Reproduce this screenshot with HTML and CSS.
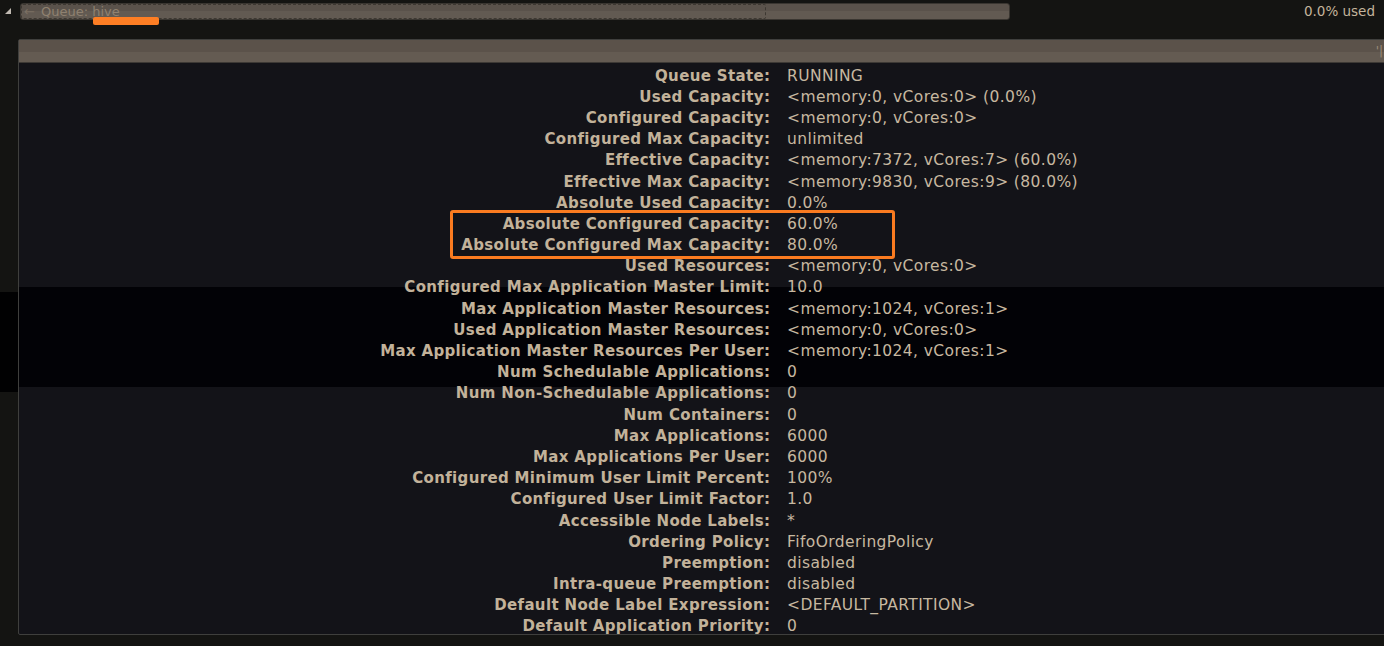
FILE: index.html
```html
<!DOCTYPE html>
<html>
<head>
<meta charset="utf-8">
<link rel="stylesheet" href="styles.css">
</head>
<body>
<div class="band-outer"></div>
<div class="topbar">
  <svg class="tri" width="6" height="6" viewBox="0 0 6 6"><polygon points="6,0 6,6 0,6" fill="#c0bab2"/></svg>
  <div class="qbar">
    <div class="qfill"><span class="arrow">←</span> Queue: hive</div>
  </div>
  <div class="used">0.0% used</div>
</div>
<div class="uline"></div>
<div class="panel">
  <div class="band-inner"></div>
  <div class="phead"><span class="pmark">'|</span></div>
  <div class="info">
    <div class="k">Queue State:</div><div class="v">RUNNING</div>
    <div class="k">Used Capacity:</div><div class="v">&lt;memory:0, vCores:0&gt; (0.0%)</div>
    <div class="k">Configured Capacity:</div><div class="v">&lt;memory:0, vCores:0&gt;</div>
    <div class="k">Configured Max Capacity:</div><div class="v">unlimited</div>
    <div class="k">Effective Capacity:</div><div class="v">&lt;memory:7372, vCores:7&gt; (60.0%)</div>
    <div class="k">Effective Max Capacity:</div><div class="v">&lt;memory:9830, vCores:9&gt; (80.0%)</div>
    <div class="k">Absolute Used Capacity:</div><div class="v">0.0%</div>
    <div class="k">Absolute Configured Capacity:</div><div class="v">60.0%</div>
    <div class="k">Absolute Configured Max Capacity:</div><div class="v">80.0%</div>
    <div class="k">Used Resources:</div><div class="v">&lt;memory:0, vCores:0&gt;</div>
    <div class="k">Configured Max Application Master Limit:</div><div class="v">10.0</div>
    <div class="k">Max Application Master Resources:</div><div class="v">&lt;memory:1024, vCores:1&gt;</div>
    <div class="k">Used Application Master Resources:</div><div class="v">&lt;memory:0, vCores:0&gt;</div>
    <div class="k">Max Application Master Resources Per User:</div><div class="v">&lt;memory:1024, vCores:1&gt;</div>
    <div class="k">Num Schedulable Applications:</div><div class="v">0</div>
    <div class="k">Num Non-Schedulable Applications:</div><div class="v">0</div>
    <div class="k">Num Containers:</div><div class="v">0</div>
    <div class="k">Max Applications:</div><div class="v">6000</div>
    <div class="k">Max Applications Per User:</div><div class="v">6000</div>
    <div class="k">Configured Minimum User Limit Percent:</div><div class="v">100%</div>
    <div class="k">Configured User Limit Factor:</div><div class="v">1.0</div>
    <div class="k">Accessible Node Labels:</div><div class="v">*</div>
    <div class="k">Ordering Policy:</div><div class="v">FifoOrderingPolicy</div>
    <div class="k">Preemption:</div><div class="v">disabled</div>
    <div class="k">Intra-queue Preemption:</div><div class="v">disabled</div>
    <div class="k">Default Node Label Expression:</div><div class="v">&lt;DEFAULT_PARTITION&gt;</div>
    <div class="k">Default Application Priority:</div><div class="v">0</div>
  </div>
</div>
<div class="hl-box"></div>
</body>
</html>
```
FILE: styles.css
```css
html, body {
  margin: 0;
  padding: 0;
}
body {
  background: #141412;
  width: 1384px;
  height: 646px;
  overflow: hidden;
  position: relative;
  font-family: "DejaVu Sans", Verdana, sans-serif;
  color: #c4b49c;
}
.band-outer {
  position: absolute;
  left: 0;
  top: 292px;
  width: 100%;
  height: 100px;
  background: #010102;
}
.topbar {
  position: relative;
  display: flex;
  align-items: center;
  height: 20px;
  padding-top: 1px;
}
.tri {
  margin-left: 5px;
  margin-top: 0;
  flex: none;
}
.qbar {
  margin-left: 9px;
  width: 988px;
  height: 15px;
  border: 1px solid #3a3631;
  border-radius: 3px;
  background: linear-gradient(#5a524b 0, #5a524b 50%, #625a52 50%, #625a52 100%);
  position: relative;
  flex: none;
}
.qfill {
  width: 741px;
  height: 13px;
  border: 1px dashed #3d3832;
  border-radius: 2px;
  font-size: 13px;
  line-height: 13px;
  color: #8f8170;
  white-space: nowrap;
  padding-left: 2px;
  box-sizing: content-box;
}
.arrow {
  color: #7a6f62;
  margin-right: 2px;
}
.used {
  margin-left: auto;
  margin-right: 9px;
  font-size: 13.5px;
  color: #c4b49c;
}
.uline {
  position: absolute;
  left: 93px;
  top: 17px;
  width: 66px;
  height: 8px;
  background: #fd7e24;
  border-radius: 2px;
}
.panel {
  position: relative;
  margin-left: 18px;
  margin-top: 18px;
  width: 1380px;
  height: 596px;
  border: 1px solid #3f3f3d;
  border-radius: 2px;
  background: #131318;
  box-sizing: border-box;
}
.band-inner {
  position: absolute;
  left: 0;
  top: 247px;
  width: 100%;
  height: 100px;
  background: #020206;
}
.phead {
  position: relative;
  height: 22px;
  width: 1365px;
  background: linear-gradient(#5b524a 0, #5b524a 12px, #645b52 12px, #645b52 100%);
  border-bottom: 1px solid #3d3935;
  display: flex;
  justify-content: flex-end;
  align-items: center;
  overflow: hidden;
}
.pmark {
  font-size: 12px;
  color: #9b8c7a;
  margin-right: 1px;
}
.info {
  position: relative;
  display: grid;
  grid-template-columns: 751px auto;
  column-gap: 17px;
  padding-top: 2px;
  grid-auto-rows: 21.2px;
  align-items: center;
}
.k {
  text-align: right;
  font-weight: bold;
  font-size: 15px;
  letter-spacing: 0.35px;
  color: #c2b29a;
  white-space: nowrap;
  margin-right: -0.35px;
}
.v {
  white-space: nowrap;
  font-size: 15.5px;
  letter-spacing: 0.4px;
  color: #c7b8a0;
}
.hl-box {
  position: absolute;
  left: 450px;
  top: 210px;
  width: 445px;
  height: 49px;
  box-sizing: border-box;
  border: 3px solid #fa7b20;
  border-radius: 3px;
}
```
